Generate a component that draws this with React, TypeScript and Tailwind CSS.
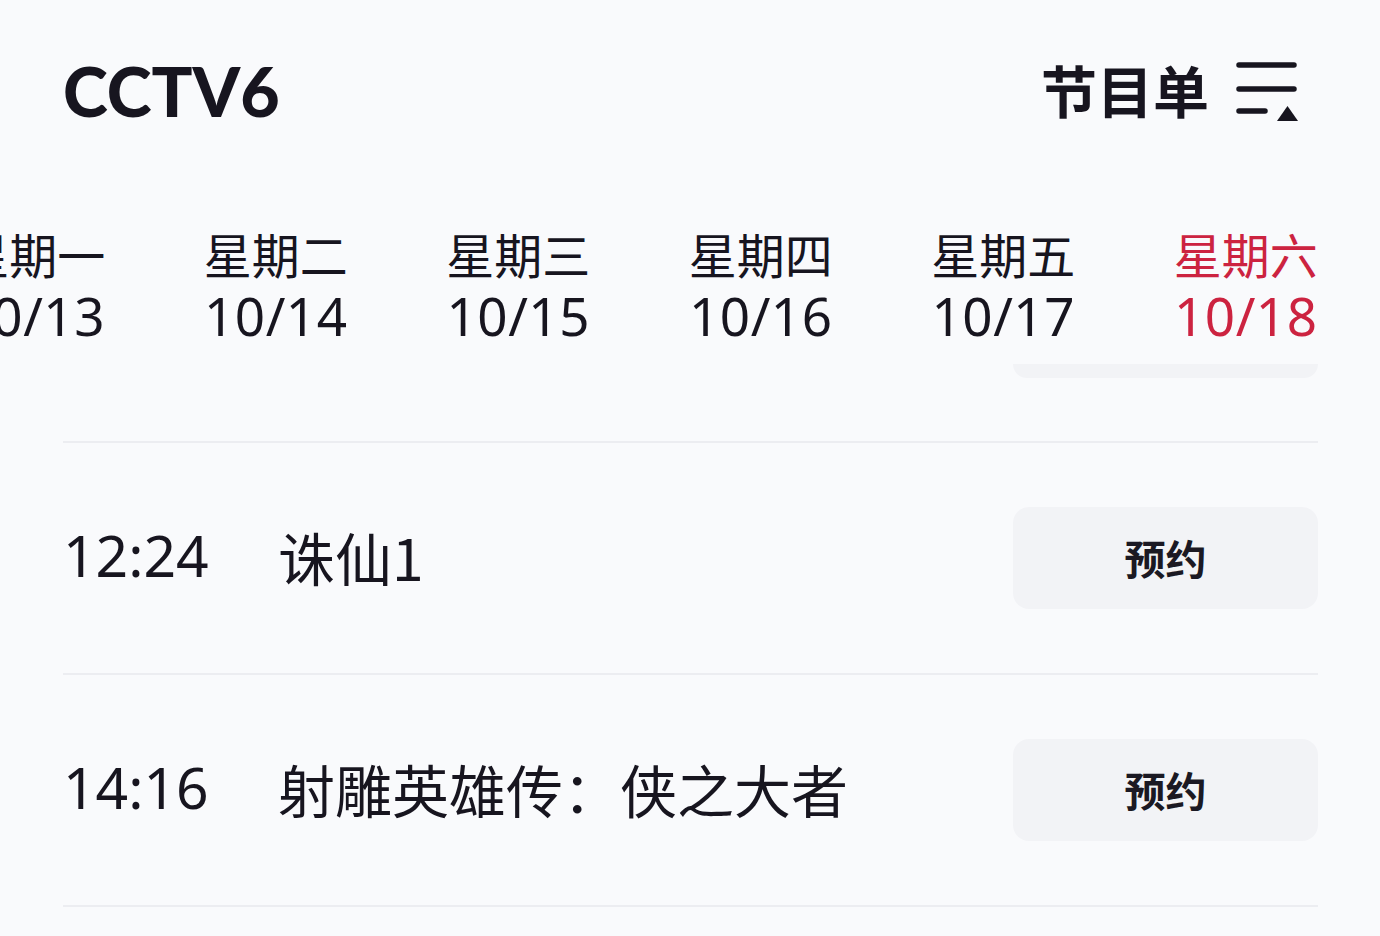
const days = [
  { day: '星期一', date: '10/13' },
  { day: '星期二', date: '10/14' },
  { day: '星期三', date: '10/15' },
  { day: '星期四', date: '10/16' },
  { day: '星期五', date: '10/17' },
  { day: '星期六', date: '10/18', active: true },
];

const programs = [
  { time: '12:24', title: '诛仙1' },
  { time: '14:16', title: '射雕英雄传：侠之大者' },
];

const MenuIcon = () => (
  <svg width="62" height="62" viewBox="0 0 62 62" fill="none" className="mt-[4px]">
    <path d="M3 3H58M3 27H58M3 49H29" stroke="#17151f" strokeWidth="5.5" strokeLinecap="round" />
    <path d="M41 59L51.5 44L62 59Z" fill="#17151f" />
  </svg>
);

export default function App() {
  return (
    <div
      className="w-[1380px] h-[936px] overflow-hidden bg-[#f9fafc] text-[#17151f]"
      style={{ fontFamily: '"Noto Sans", "Noto Sans CJK SC", sans-serif' }}
    >
      <header className="h-[182px] pl-[63px] pr-[82px] flex items-center justify-between">
        <h1 className="text-[68px] leading-none font-black font-['Lato',sans-serif]">CCTV6</h1>
        <div className="flex items-center gap-[27px]">
          <span className="text-[56px] leading-none font-bold font-['Noto_Sans_CJK_SC',sans-serif] -mt-[4px]">节目单</span>
          <MenuIcon />
        </div>
      </header>

      <div className="mt-[41px] overflow-hidden">
        <div className="flex -ml-[88px]">
          {days.map((d) => (
            <div
              key={d.date}
              className={`w-[242.5px] shrink-0 flex flex-col items-center ${d.active ? 'text-[#cc2340]' : ''}`}
            >
              <span className="text-[48px] leading-[60px] font-['Noto_Sans_CJK_SC',sans-serif]">{d.day}</span>
              <span className="text-[53px] leading-[66px] tracking-[0.5px]">{d.date}</span>
            </div>
          ))}
        </div>
      </div>

      <div className="pr-[62px] pl-[63px]">
        <div className="flex justify-end mt-[15px]">
          <div className="w-[305px] h-[14px] rounded-b-[14px] bg-[#f2f3f6]" />
        </div>

        <div className="mt-[63px] h-[2px] bg-[#ecedf1]" />

        {programs.map((p) => (
          <div key={p.time}>
            <div className="h-[230px] flex items-center">
              <span className="w-[215px] shrink-0 text-[57px] leading-none -mt-[5px]">{p.time}</span>
              <span className="flex-1 text-[57px] leading-none font-['Noto_Sans_CJK_SC',sans-serif] -mt-[3px]">{p.title}</span>
              <button className="w-[305px] h-[102px] rounded-[16px] bg-[#f2f3f6] text-[41px] font-bold text-[#1b1923] font-['Noto_Sans_CJK_SC',sans-serif]">
                预约
              </button>
            </div>
            <div className="h-[2px] bg-[#ecedf1]" />
          </div>
        ))}
      </div>
    </div>
  );
}
